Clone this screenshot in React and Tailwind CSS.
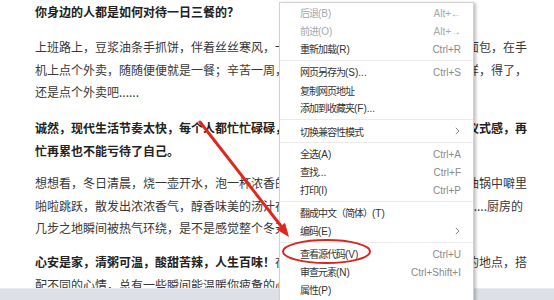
import React from "react";

const menu = [
  { zh: "后退", en: "(B)", sc: "Alt+←", disabled: true },
  { zh: "前进", en: "(O)", sc: "Alt+→", disabled: true },
  { zh: "重新加载", en: "(R)", sc: "Ctrl+R" },
  "sep",
  { zh: "网页另存为", en: "(S)...", sc: "Ctrl+S" },
  { zh: "复制网页地址" },
  { zh: "添加到收藏夹", en: "(F)..." },
  "sep",
  { zh: "切换兼容性模式", sub: true },
  "sep",
  { zh: "全选", en: "(A)", sc: "Ctrl+A" },
  { zh: "查找", en: "...", sc: "Ctrl+F" },
  { zh: "打印", en: "(I)", sc: "Ctrl+P" },
  "sep",
  { zh: "翻成中文（简体）", en: "(T)" },
  { zh: "编码", en: "(E)", sub: true },
  "sep",
  { zh: "查看源代码", en: "(V)", sc: "Ctrl+U" },
  { zh: "审查元素", en: "(N)", sc: "Ctrl+Shift+I" },
  { zh: "属性", en: "(P)" },
];

function Line({ children, bold }) {
  return (
    <div className={"whitespace-nowrap h-[22.5px] leading-[22.5px] " + (bold ? "font-bold text-[#222]" : "")}>
      {children}
    </div>
  );
}

export default function App() {
  return (
    <div
      className="relative w-[554px] h-[300px] overflow-hidden bg-white flex flex-col"
      style={{ fontFamily: '"Noto Sans CJK SC", "Noto Sans", sans-serif' }}
    >
      <div className="h-[288px] overflow-hidden pl-[35px] text-[12px] text-[#383838]">
        <div className="pt-[1px]">
          <Line bold>你身边的人都是如何对待一日三餐的？</Line>
        </div>
        <div className="mt-[12.5px]">
          <Line>上班路上，豆浆油条手抓饼，伴着丝丝寒风，一边走一边吃；中午坐在工位上啃着面包，在手</Line>
          <Line>机上点个外卖，随随便便就是一餐；辛苦一周，周末想吃好的，又懒得折腾，怎么样，得了，</Line>
          <Line>还是点个外卖吧......</Line>
        </div>
        <div className="mt-[13.5px]">
          <Line bold>诚然，现代生活节奏太快，每个人都忙忙碌碌，吃饭变成了一件应付的事，少了些仪式感，再</Line>
          <Line bold>忙再累也不能亏待了自己。</Line>
        </div>
        <div className="mt-[10px]">
          <Line>想想看，冬日清晨，烧一壶开水，泡一杯浓香的咖啡，煎一个金黄的荷包蛋，蛋在油锅中噼里</Line>
          <Line>啪啦跳跃，散发出浓浓香气，醇香味美的汤汁在锅里翻滚，一家人围坐在桌前等待......厨房的</Line>
          <Line>几步之地瞬间被热气环绕，是不是感觉整个冬天都温暖了起来？</Line>
        </div>
        <div className="mt-[11.5px]">
          <Line>
            <span className="font-bold text-[#222]">心安是家，清粥可温，酸甜苦辣，人生百味！</span>
            在不同的时间，不同的季节，在不同的地点，搭
          </Line>
          <Line>配不同的心情，总有一些瞬间能温暖你疲惫的心。</Line>
        </div>
      </div>
      <div className="h-[12px] bg-[#dde0e6] border-t border-[#e9ebef]" />

      {/* context menu */}
      <div
        className="absolute left-[279px] top-[2px] w-[195px] h-[310px] bg-white border border-[#d2d2d2] shadow-[2px_1px_3px_rgba(0,0,0,0.25)] pt-[1px] text-[10px]"
      >
        {menu.map((m, i) =>
          m === "sep" ? (
            <div key={i} className="h-[5px] flex items-center">
              <div className="h-px w-full bg-[#ebebeb]" />
            </div>
          ) : (
            <div
              key={i}
              className={
                "h-[18px] flex items-center justify-between pl-[20px] pr-[12px] " +
                (m.disabled ? "text-[#a8a8a8]" : "text-[#333]")
              }
            >
              <span className="whitespace-nowrap">
                <span className="tracking-[-1px]">{m.zh}</span>
                {m.en && <span style={{ fontFamily: '"Liberation Sans", sans-serif' }}>{m.en}</span>}
              </span>
              {m.sc && (
                <span
                  className={m.disabled ? "text-[#a8a8a8]" : "text-[#8a8a8a]"}
                  style={{ fontFamily: '"Liberation Sans", sans-serif' }}
                >
                  {m.sc}
                </span>
              )}
              {m.sub && (
                <svg width="5" height="8" viewBox="0 0 5 8" className="mr-[1px]">
                  <path d="M0.8 0.8 L4 4 L0.8 7.2" fill="none" stroke="#8a8a8a" strokeWidth="1" />
                </svg>
              )}
            </div>
          )
        )}
      </div>

      {/* red annotations */}
      <svg className="absolute left-0 top-0 pointer-events-none" width="554" height="300">
        <line x1="200" y1="122" x2="281" y2="226" stroke="#e3261d" strokeWidth="3" strokeLinecap="round" />
        <polygon points="289,237 276.5,229.5 285,222.8" fill="#e3261d" />
        <ellipse cx="326.5" cy="251.5" rx="43.5" ry="11.5" fill="none" stroke="#d8261c" strokeWidth="2" />
      </svg>
    </div>
  );
}
